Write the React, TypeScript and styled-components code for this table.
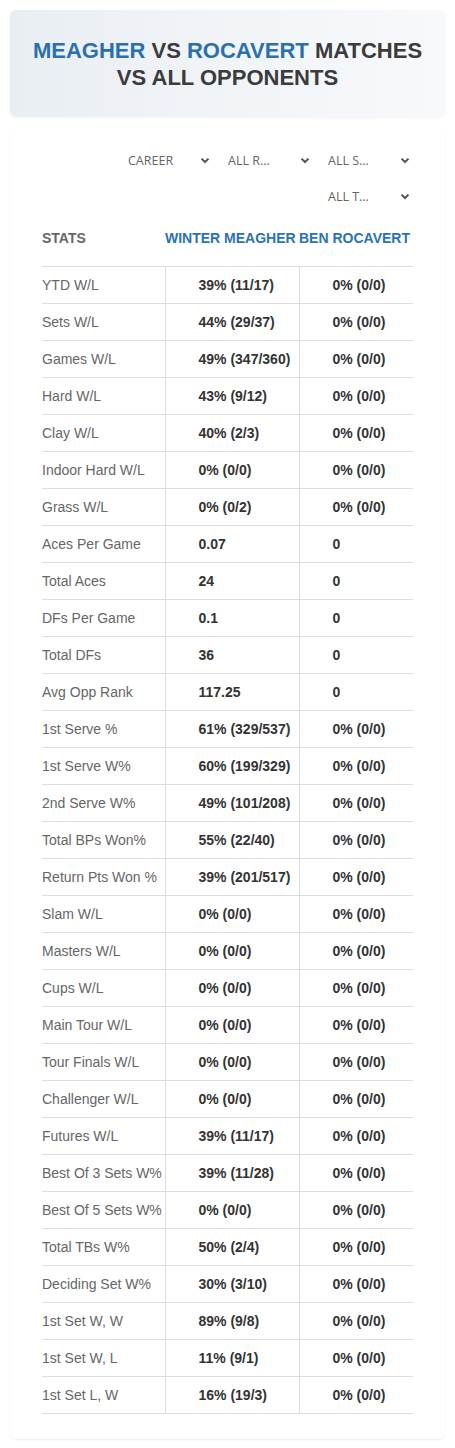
import React from "react";
import styled, { createGlobalStyle } from "styled-components";

const GlobalStyle = createGlobalStyle`
  body {
    margin: 0;
    background: #fff;
    font-family: "Liberation Sans", Arial, sans-serif;
  }
`;

type StatRow = [string, string, string];

const rows: StatRow[] = [
  ["YTD W/L", "39% (11/17)", "0% (0/0)"],
  ["Sets W/L", "44% (29/37)", "0% (0/0)"],
  ["Games W/L", "49% (347/360)", "0% (0/0)"],
  ["Hard W/L", "43% (9/12)", "0% (0/0)"],
  ["Clay W/L", "40% (2/3)", "0% (0/0)"],
  ["Indoor Hard W/L", "0% (0/0)", "0% (0/0)"],
  ["Grass W/L", "0% (0/2)", "0% (0/0)"],
  ["Aces Per Game", "0.07", "0"],
  ["Total Aces", "24", "0"],
  ["DFs Per Game", "0.1", "0"],
  ["Total DFs", "36", "0"],
  ["Avg Opp Rank", "117.25", "0"],
  ["1st Serve %", "61% (329/537)", "0% (0/0)"],
  ["1st Serve W%", "60% (199/329)", "0% (0/0)"],
  ["2nd Serve W%", "49% (101/208)", "0% (0/0)"],
  ["Total BPs Won%", "55% (22/40)", "0% (0/0)"],
  ["Return Pts Won %", "39% (201/517)", "0% (0/0)"],
  ["Slam W/L", "0% (0/0)", "0% (0/0)"],
  ["Masters W/L", "0% (0/0)", "0% (0/0)"],
  ["Cups W/L", "0% (0/0)", "0% (0/0)"],
  ["Main Tour W/L", "0% (0/0)", "0% (0/0)"],
  ["Tour Finals W/L", "0% (0/0)", "0% (0/0)"],
  ["Challenger W/L", "0% (0/0)", "0% (0/0)"],
  ["Futures W/L", "39% (11/17)", "0% (0/0)"],
  ["Best Of 3 Sets W%", "39% (11/28)", "0% (0/0)"],
  ["Best Of 5 Sets W%", "0% (0/0)", "0% (0/0)"],
  ["Total TBs W%", "50% (2/4)", "0% (0/0)"],
  ["Deciding Set W%", "30% (3/10)", "0% (0/0)"],
  ["1st Set W, W", "89% (9/8)", "0% (0/0)"],
  ["1st Set W, L", "11% (9/1)", "0% (0/0)"],
  ["1st Set L, W", "16% (19/3)", "0% (0/0)"],
];

const Chevron = () => (
  <svg width="10" height="7" viewBox="0 0 10 7">
    <path d="M1.5 1.6 L5 5 L8.5 1.6" fill="none" stroke="#555" strokeWidth="2" />
  </svg>
);

// labels are shown already shortened, as the narrow selects clip them
const Dropdown: React.FC<{ label: string; title: string }> = ({ label, title }) => (
  <Select title={title}>
    <SelectText>{label}</SelectText>
    <Chevron />
  </Select>
);

export default function App() {
  return (
    <Page>
      <GlobalStyle />
      <TitleCard>
        <Title>
          <Name>MEAGHER</Name> VS <Name>ROCAVERT</Name> MATCHES
          <br />
          VS ALL OPPONENTS
        </Title>
      </TitleCard>
      <ContentCard>
        <Filters>
          <FilterRow>
            <Dropdown label="CAREER" title="CAREER" />
            <Dropdown label="ALL R…" title="ALL ROUNDS" />
            <Dropdown label="ALL S…" title="ALL SURFACES" />
          </FilterRow>
          <FilterRow>
            <Dropdown label="ALL T…" title="ALL TOURNAMENTS" />
          </FilterRow>
        </Filters>
        <Table>
          <thead>
            <tr>
              <HeadCell>STATS</HeadCell>
              <PlayerHead>WINTER MEAGHER</PlayerHead>
              <PlayerHead>BEN ROCAVERT</PlayerHead>
            </tr>
          </thead>
          <tbody>
            {rows.map(([label, a, b]) => (
              <tr key={label}>
                <LabelCell>{label}</LabelCell>
                <ValueCell>{a}</ValueCell>
                <ValueCell>{b}</ValueCell>
              </tr>
            ))}
          </tbody>
        </Table>
      </ContentCard>
    </Page>
  );
}

const Page = styled.div`
  padding: 10px;
`;

const TitleCard = styled.div`
  background: linear-gradient(90deg, #e9eef3 0%, #f2f5f8 55%, #f7f9fb 100%);
  border-radius: 6px;
  box-shadow: 0 1px 3px rgba(0, 0, 0, 0.05);
  padding: 27px 6px 26px;
  text-align: center;
`;

const Title = styled.h1`
  margin: 0;
  font-size: 22px;
  line-height: 27px;
  font-weight: 700;
  color: #3b3b3b;
`;

const Name = styled.span`
  color: #2a6fb0;
`;

const ContentCard = styled.div`
  margin-top: 10px;
  padding: 19px 32px 25px;
  border-radius: 6px;
  box-shadow: 0 1px 2px rgba(0, 0, 0, 0.07);
`;

const Filters = styled.div`
  display: flex;
  flex-direction: column;
  gap: 8px;
`;

const FilterRow = styled.div`
  display: flex;
  justify-content: flex-end;
  gap: 10px;
`;

const Select = styled.div`
  width: 90px;
  height: 28px;
  box-sizing: border-box;
  padding: 0 3px 0 5px;
  display: flex;
  align-items: center;
  justify-content: space-between;
`;

const SelectText = styled.span`
  font-family: "Open Sans", "Noto Sans", sans-serif;
  font-size: 12.5px;
  color: #666;
  white-space: nowrap;
`;

const Table = styled.table`
  width: 100%;
  border-collapse: collapse;
  table-layout: fixed;
  font-size: 14px;

  th:nth-child(1) {
    width: 123px;
  }
  th:nth-child(2) {
    width: 134px;
  }
`;

const HeadCell = styled.th`
  height: 56px;
  padding: 0;
  text-align: left;
  font-size: 14px;
  font-weight: 700;
  color: #666;
  border-bottom: 1px solid #ddd;
  white-space: nowrap;
`;

const PlayerHead = styled(HeadCell)`
  color: #2a72b5;
`;

const LabelCell = styled.td`
  height: 36px;
  padding: 0;
  color: #666;
  border-bottom: 1px solid #ddd;
  white-space: nowrap;
`;

const ValueCell = styled.td`
  height: 36px;
  padding: 0 0 0 33px;
  font-weight: 700;
  color: #333;
  border-bottom: 1px solid #ddd;
  border-left: 1px solid #ddd;
  white-space: nowrap;
`;
